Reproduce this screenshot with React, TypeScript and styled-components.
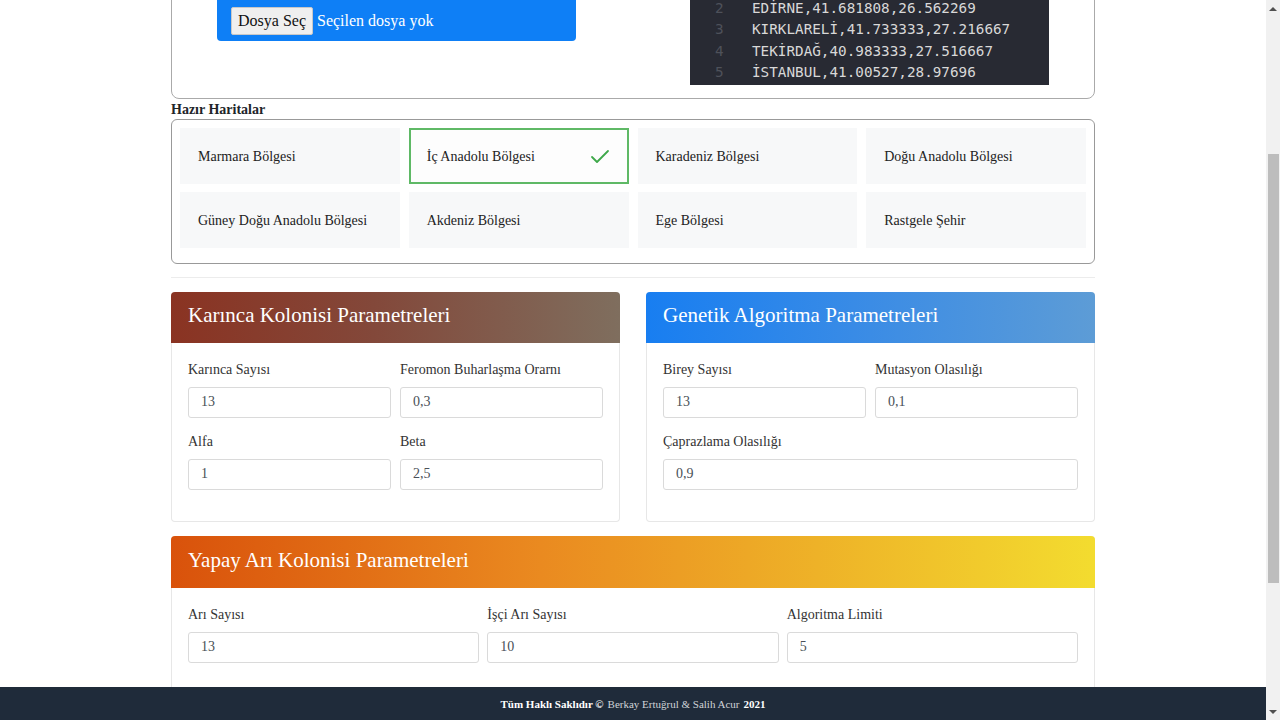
import React, { useLayoutEffect, useRef, useState } from 'react'
import styled, { createGlobalStyle } from 'styled-components'
import { Check } from 'lucide-react'

const GlobalStyle = createGlobalStyle`
  body {
    margin: 0;
    background: #fff;
    color: #212529;
    font-family: "Liberation Serif", "Times New Roman", serif;
  }
  * {
    box-sizing: border-box;
  }
`

const Shell = styled.div`
  display: flex;
  height: 100vh;
  overflow: hidden;
`

const Screen = styled.div`
  position: relative;
  flex: 1;
  min-width: 0;
`

const Scroller = styled.div`
  height: 100%;
  overflow: hidden;
`

const ScrollTrack = styled.div`
  display: flex;
  flex-direction: column;
  width: 14px;
  background: #f1f1f1;
`

const ScrollArrow = styled.div<{ $down?: boolean }>`
  display: flex;
  align-items: center;
  justify-content: center;
  height: 17px;

  &::after {
    content: '';
    border-left: 4px solid transparent;
    border-right: 4px solid transparent;
    ${(p) => (p.$down ? 'border-top' : 'border-bottom')}: 4px solid #505050;
  }
`

const ScrollRail = styled.div`
  position: relative;
  flex: 1;
`

const ScrollThumb = styled.div`
  position: absolute;
  left: 2px;
  right: 1px;
  background: #bdbdbd;
`

const Page = styled.main`
  width: 924px;
  margin: 0 auto;
  padding-bottom: 35px;
`

const PageHeader = styled.header`
  padding: 60px 0 55px;
  text-align: center;
`

const PageTitle = styled.h1`
  margin: 0 0 8px;
  font-size: 34px;
  font-weight: 700;
`

const PageSubtitle = styled.p`
  margin: 0;
  font-size: 16px;
  color: #6c757d;
`

const UploadCard = styled.section`
  display: flex;
  justify-content: space-between;
  align-items: flex-start;
  padding: 18px 45px 13px;
  border: 1px solid #aaa;
  border-radius: 8px;
`

const UploadColumn = styled.div`
  width: 359px;
`

const Caption = styled.div`
  font-size: 14px;
  font-weight: 700;
  line-height: 18px;
`

const FileBox = styled.label`
  display: flex;
  align-items: center;
  gap: 4px;
  padding: 22px 14px 6px;
  border-radius: 4px;
  background: #0e7ff6;
  color: #fff;
  font-size: 16px;
  cursor: pointer;
`

const FileButton = styled.span`
  height: 28px;
  padding: 0 6px;
  line-height: 26px;
  border: 1px solid #c8c8c8;
  border-radius: 2px;
  background: #efefef;
  color: #111;
`

const CodeView = styled.div`
  width: 359px;
  padding: 9px 0 1px;
  background: #282a33;
  font-family: "DejaVu Sans Mono", "Liberation Mono", monospace;
  font-size: 14.3px;
  line-height: 21.5px;
`

const CodeLine = styled.div`
  display: grid;
  grid-template-columns: 62px 1fr;
  white-space: pre;
`

const LineNo = styled.span`
  padding-left: 25px;
  color: #4e515a;
`

const LineText = styled.span`
  color: #d8d8d8;
`

const SectionLabel = styled.div`
  padding-top: 1px;
  font-size: 14px;
  font-weight: 700;
  line-height: 19px;
`

const MapGrid = styled.div`
  display: grid;
  grid-template-columns: repeat(4, 1fr);
  gap: 8px 9px;
  padding: 8px 8px 15px;
  border: 1px solid #999;
  border-radius: 6px;
`

const MapTile = styled.button<{ $active?: boolean }>`
  display: flex;
  align-items: center;
  justify-content: space-between;
  height: 56px;
  padding: 3px 15px 0 16px;
  border: 2px solid ${(p) => (p.$active ? '#5fb966' : 'transparent')};
  background: ${(p) => (p.$active ? '#fdfdfd' : '#f7f8f9')};
  color: #222;
  font-family: inherit;
  font-size: 14px;
  text-align: left;
  cursor: pointer;
`

const Divider = styled.hr`
  margin: 13px 0 14px;
  border: 0;
  border-top: 1px solid #ececec;
`

const PanelRow = styled.div`
  display: grid;
  grid-template-columns: 1fr 1fr;
  align-items: start;
  gap: 26px;
`

const Panel = styled.section<{ $spaced?: boolean }>`
  margin-top: ${(p) => (p.$spaced ? 14 : 0)}px;
  border: 1px solid #e7e7e7;
  border-top: 0;
  border-radius: 4px;
`

const PanelHeader = styled.h2<{ $bg: string; $height?: number }>`
  display: flex;
  align-items: center;
  height: ${(p) => p.$height ?? 51}px;
  margin: 0 -1px;
  padding: 0 17px 3px;
  border-radius: 4px 4px 0 0;
  background: ${(p) => p.$bg};
  color: #fff;
  font-size: 21px;
  font-weight: 400;
`

const PanelBody = styled.div<{ $cols: number; $gap: number }>`
  display: grid;
  grid-template-columns: repeat(${(p) => p.$cols}, 1fr);
  column-gap: ${(p) => p.$gap}px;
  padding: 17px 16px;
`

const Field = styled.label<{ $wide?: boolean }>`
  display: block;
  margin-bottom: 14px;
  grid-column: ${(p) => (p.$wide ? '1 / -1' : 'auto')};
`

const FieldName = styled.span`
  display: block;
  margin-bottom: 7px;
  font-size: 14px;
  line-height: 20px;
  color: #333;
`

const Input = styled.input`
  display: block;
  width: 100%;
  height: 31px;
  padding: 0 12px;
  border: 1px solid #dadada;
  border-radius: 3px;
  color: #495057;
  font-family: inherit;
  font-size: 14px;
  outline: none;
`

const ActionRow = styled.div`
  display: flex;
  justify-content: center;
  gap: 12px;
  margin-top: 20px;
`

const ActionButton = styled.button<{ $bg: string }>`
  height: 42px;
  padding: 0 22px;
  border: 0;
  border-radius: 4px;
  background: ${(p) => p.$bg};
  color: #fff;
  font-family: inherit;
  font-size: 16px;
`

const ResultCard = styled.section`
  margin-top: 20px;
  padding: 16px;
  min-height: 110px;
  border: 1px solid #e7e7e7;
  border-radius: 4px;
  font-size: 14px;
  color: #6c757d;
`

const Footer = styled.footer`
  position: absolute;
  left: 0;
  right: 0;
  bottom: 0;
  display: flex;
  align-items: center;
  justify-content: center;
  height: 33px;
  background: #1f2b3a;
  color: #fff;
  font-size: 11px;
`

const Strong = styled.b`
  font-weight: 700;
`

const Names = styled.span`
  margin: 0 4px;
  color: #cfd3d8;
`

const csvLines = [
  'ŞEHİR,ENLEM,BOYLAM',
  'EDİRNE,41.681808,26.562269',
  'KIRKLARELİ,41.733333,27.216667',
  'TEKİRDAĞ,40.983333,27.516667',
  'İSTANBUL,41.00527,28.97696',
]

const regions = [
  'Marmara Bölgesi',
  'İç Anadolu Bölgesi',
  'Karadeniz Bölgesi',
  'Doğu Anadolu Bölgesi',
  'Güney Doğu Anadolu Bölgesi',
  'Akdeniz Bölgesi',
  'Ege Bölgesi',
  'Rastgele Şehir',
]

const antFields = [
  { name: 'Karınca Sayısı', value: '13' },
  { name: 'Feromon Buharlaşma Orarnı', value: '0,3' },
  { name: 'Alfa', value: '1' },
  { name: 'Beta', value: '2,5' },
]

const geneticFields = [
  { name: 'Birey Sayısı', value: '13' },
  { name: 'Mutasyon Olasılığı', value: '0,1' },
  { name: 'Çaprazlama Olasılığı', value: '0,9', wide: true },
]

const beeFields = [
  { name: 'Arı Sayısı', value: '13' },
  { name: 'İşçi Arı Sayısı', value: '10' },
  { name: 'Algoritma Limiti', value: '5' },
]

type FieldDef = { name: string; value: string; wide?: boolean }

const Fields: React.FC<{ items: FieldDef[] }> = ({ items }) => (
  <>
    {items.map((f) => (
      <Field key={f.name} $wide={f.wide}>
        <FieldName>{f.name}</FieldName>
        <Input defaultValue={f.value} />
      </Field>
    ))}
  </>
)

export default function App() {
  const scrollerRef = useRef<HTMLDivElement>(null)
  const railRef = useRef<HTMLDivElement>(null)
  const mapsRef = useRef<HTMLDivElement>(null)
  const [thumb, setThumb] = useState({ top: 0, height: 0 })

  // open with the parameter section in view, then size the thumb from it
  useLayoutEffect(() => {
    const scroller = scrollerRef.current
    const rail = railRef.current
    const maps = mapsRef.current
    if (!scroller || !rail || !maps) return
    const offset =
      maps.getBoundingClientRect().top - scroller.getBoundingClientRect().top + scroller.scrollTop
    scroller.scrollTop = offset - 119
    const railH = rail.clientHeight
    const total = scroller.scrollHeight
    setThumb({
      top: (scroller.scrollTop / total) * railH,
      height: (scroller.clientHeight / total) * railH,
    })
  }, [])

  return (
    <>
      <GlobalStyle />
      <Shell>
        <Screen>
          <Scroller ref={scrollerRef}>
            <Page>
              <PageHeader>
                <PageTitle>Gezgin Satıcı Problemi</PageTitle>
                <PageSubtitle>Karınca Kolonisi, Genetik Algoritma ve Yapay Arı Kolonisi</PageSubtitle>
              </PageHeader>

              <UploadCard>
                <UploadColumn>
                  <Caption>Şehir Dosyası</Caption>
                  <FileBox>
                    <FileButton>Dosya Seç</FileButton>
                    Seçilen dosya yok
                  </FileBox>
                </UploadColumn>
                <CodeView>
                  {csvLines.map((line, i) => (
                    <CodeLine key={line}>
                      <LineNo>{i + 1}</LineNo>
                      <LineText>{line}</LineText>
                    </CodeLine>
                  ))}
                </CodeView>
              </UploadCard>

              <SectionLabel>Hazır Haritalar</SectionLabel>
              <MapGrid ref={mapsRef}>
                {regions.map((r, i) => (
                  <MapTile key={r} $active={i === 1}>
                    {r}
                    {i === 1 && <Check size={24} strokeWidth={1.8} color="#3ea84a" />}
                  </MapTile>
                ))}
              </MapGrid>

              <Divider />

              <PanelRow>
                <Panel>
                  <PanelHeader $bg="linear-gradient(90deg, #8a3322 0%, #83483a 45%, #7f6e5e 100%)">
                    Karınca Kolonisi Parametreleri
                  </PanelHeader>
                  <PanelBody $cols={2} $gap={9}>
                    <Fields items={antFields} />
                  </PanelBody>
                </Panel>
                <Panel>
                  <PanelHeader $bg="linear-gradient(90deg, #187ef1 0%, #3b8ce5 50%, #5d9cd6 100%)">
                    Genetik Algoritma Parametreleri
                  </PanelHeader>
                  <PanelBody $cols={2} $gap={9}>
                    <Fields items={geneticFields} />
                  </PanelBody>
                </Panel>
              </PanelRow>

              <Panel $spaced>
                <PanelHeader
                  $height={52}
                  $bg="linear-gradient(90deg, #d9520b 0%, #ea8a20 40%, #eeb228 70%, #f3dc2f 100%)"
                >
                  Yapay Arı Kolonisi Parametreleri
                </PanelHeader>
                <PanelBody $cols={3} $gap={8}>
                  <Fields items={beeFields} />
                </PanelBody>
              </Panel>

              <ActionRow>
                <ActionButton $bg="#8a3322">Karınca Kolonisi ile Çöz</ActionButton>
                <ActionButton $bg="#187ef1">Genetik Algoritma ile Çöz</ActionButton>
                <ActionButton $bg="#e0701a">Yapay Arı Kolonisi ile Çöz</ActionButton>
              </ActionRow>

              <ResultCard>Sonuçlar burada gösterilecek.</ResultCard>
            </Page>
          </Scroller>

          <Footer>
            <Strong>Tüm Haklı Saklıdır ©</Strong>
            <Names>Berkay Ertuğrul &amp; Salih Acur</Names>
            <Strong>2021</Strong>
          </Footer>
        </Screen>

        <ScrollTrack>
          <ScrollArrow />
          <ScrollRail ref={railRef}>
            <ScrollThumb style={{ top: thumb.top, height: thumb.height }} />
          </ScrollRail>
          <ScrollArrow $down />
        </ScrollTrack>
      </Shell>
    </>
  )
}
